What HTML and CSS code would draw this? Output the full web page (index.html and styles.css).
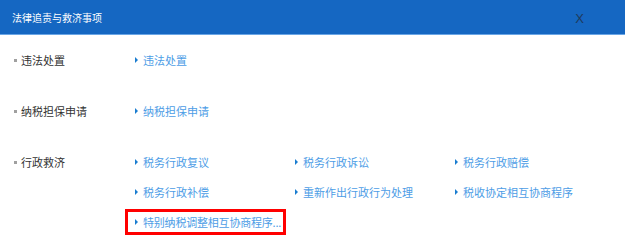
FILE: index.html
```html
<!DOCTYPE html>
<html lang="zh-CN">
<head>
    <meta charset="UTF-8">
    <title>法律追责与救济事项</title>
    <link rel="stylesheet" href="styles.css">
</head>
<body>
<div class="dialog">
    <div class="dialog-head">
        <span class="dialog-title">法律追责与救济事项</span>
        <span class="close-btn">X</span>
    </div>

    <div class="dialog-body">
        <div class="group">
            <div class="label">违法处置</div>
            <div class="links">
                <a class="link">违法处置</a>
            </div>
        </div>

        <div class="group">
            <div class="label">纳税担保申请</div>
            <div class="links">
                <a class="link">纳税担保申请</a>
            </div>
        </div>

        <div class="group">
            <div class="label">行政救济</div>
            <div class="links">
                <a class="link">税务行政复议</a>
                <a class="link">税务行政诉讼</a>
                <a class="link">税务行政赔偿</a>
                <a class="link">税务行政补偿</a>
                <a class="link">重新作出行政行为处理</a>
                <a class="link">税收协定相互协商程序</a>
                <a class="link"><span class="mark">特别纳税调整相互协商程序...</span></a>
            </div>
        </div>
    </div>
</div>
</body>
</html>
```

FILE: styles.css
```css
body {
    margin: 0;
    height: 100vh;
    overflow: hidden;
    background: #fff;
    font-family: "Noto Sans CJK SC", "Microsoft YaHei", sans-serif;
}

.dialog-head {
    height: 34px;
    background: #1567c2;
    border-bottom: 1px solid #6aa6e6;
    display: flex;
    align-items: center;
    justify-content: space-between;
    padding: 0 41px 0 12px;
}

.dialog-title {
    color: #fff;
    font-size: 10px;
    padding-top: 1px;
}

.close-btn {
    color: #1f3a5c;
    font-family: "Liberation Sans", sans-serif;
    font-size: 13px;
    padding-top: 3px;
}

.dialog-body {
    padding-top: 10px;
}

.group {
    display: flex;
    margin-bottom: 21px;
}

.group:last-child {
    margin-bottom: 0;
}

/* 左侧分类名 */
.label {
    width: 114px;
    padding-left: 14px;
    height: 30px;
    display: flex;
    align-items: center;
    font-size: 11px;
    color: #333;
    flex-shrink: 0;
}

.label::before {
    content: '';
    width: 3px;
    height: 3px;
    background: #a0a0a0;
    margin-right: 4px;
}

.links {
    display: grid;
    grid-template-columns: repeat(3, 160px);
    grid-auto-rows: 30px;
    margin-left: 7px;
}

.link {
    display: flex;
    align-items: center;
    font-size: 11px;
    color: #4d9de6;
    cursor: pointer;
    white-space: nowrap;
}

.link::before {
    content: '';
    border-left: 3px solid #1a7dd0;
    border-top: 3px solid transparent;
    border-bottom: 3px solid transparent;
    margin-right: 5px;
}

/* 红框标注 */
.link .mark {
    border: 3px solid #f00;
    height: 20px;
    line-height: 20px;
    margin-left: -18px;
    padding: 0 2px 0 15px;
    letter-spacing: -0.2px;
}
```
